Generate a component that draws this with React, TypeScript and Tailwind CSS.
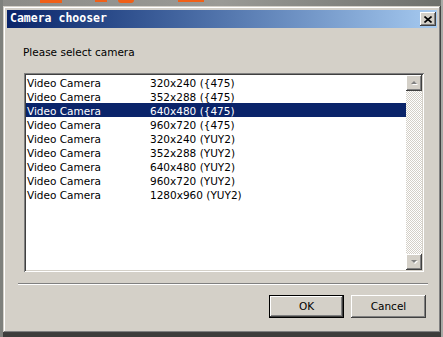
import React from "react";

const rows: [string, string][] = [
  ["Video Camera", "320x240 ({475)"],
  ["Video Camera", "352x288 ({475)"],
  ["Video Camera", "640x480 ({475)"],
  ["Video Camera", "960x720 ({475)"],
  ["Video Camera", "320x240 (YUY2)"],
  ["Video Camera", "352x288 (YUY2)"],
  ["Video Camera", "640x480 (YUY2)"],
  ["Video Camera", "960x720 (YUY2)"],
  ["Video Camera", "1280x960 (YUY2)"],
];

const raised =
  "shadow-[inset_-1px_-1px_0_#404040,inset_1px_1px_0_#ffffff,inset_-2px_-2px_0_#808080,inset_2px_2px_0_#d4d0c8]";

function Arrow({ up }: { up: boolean }) {
  return (
    <svg width="7" height="4" viewBox="0 0 7 4" className="block">
      {up ? (
        <>
          <path d="M1 4 L4 1 L7 4 Z" fill="#ffffff" />
          <path d="M0 3 L3 0 L6 3 Z" fill="#808080" />
        </>
      ) : (
        <>
          <path d="M1 1 L7 1 L4 4 Z" fill="#ffffff" />
          <path d="M0 0 L6 0 L3 3 Z" fill="#808080" />
        </>
      )}
    </svg>
  );
}

export default function App() {
  return (
    <div
      className="relative w-[443px] h-[337px] overflow-hidden bg-[#3d3d3b]"
      style={{ fontFamily: '"DejaVu Sans", Verdana, sans-serif' }}
    >
      {/* background photo strip */}
      <div className="absolute left-0 top-0 w-[443px] h-[8px] bg-gradient-to-r from-[#8c8c88] via-[#9a9a96] to-[#6e706c]" />
      <div className="absolute left-[40px] top-0 w-[22px] h-[3px] bg-[#f06018]" />
      <div className="absolute left-[118px] top-0 w-[16px] h-[3px] rounded-b-full bg-[#f06018]" />
      <div className="absolute left-[178px] top-0 w-[26px] h-[2px] bg-[#f06018]" />
      <div className="absolute left-[95px] top-0 w-[12px] h-[2px] bg-[#f06018]" />
      <div className="absolute left-0 top-0 w-[3px] h-[337px] bg-[#7e807c]" />
      <div className="absolute right-0 top-0 w-[2px] h-[337px] bg-[#a8aaa6]" />

      {/* window */}
      <div className="relative ml-[3px] mt-[6px] w-[438px] h-[327px] bg-[#d4d0c8] p-[4px] shadow-[inset_-1px_-1px_0_#404040,inset_1px_1px_0_#d4d0c8,inset_-2px_-2px_0_#808080,inset_2px_2px_0_#ffffff] flex flex-col">
        {/* title bar */}
        <div className="h-[18px] flex items-center bg-gradient-to-r from-[#0a246a] to-[#a6caf0] pl-[3px]">
          <span
            className="flex-1 text-white font-bold text-[11.5px] leading-[16px] h-[18px] whitespace-pre"
            style={{ fontFamily: '"DejaVu Sans Mono", monospace' }}
          >
            Camera chooser
          </span>
          <div className={`w-[16px] h-[14px] mr-[1px] bg-[#d4d0c8] flex items-center justify-center ${raised}`}>
            <svg width="8" height="7" viewBox="0 0 8 7">
              <path d="M0.5 0.5 L7.5 6.5 M7.5 0.5 L0.5 6.5" stroke="#000" strokeWidth="1.6" />
            </svg>
          </div>
        </div>

        {/* content */}
        <div className="flex-1 flex flex-col">
          <div className="mt-[17px] ml-[16px] text-[10.5px] leading-[14px] text-black">
            Please select camera
          </div>

          {/* listbox */}
          <div className="mt-[14px] ml-[17px] w-[400px] h-[199px] bg-white p-[2px] shadow-[inset_1px_1px_0_#808080,inset_-1px_-1px_0_#ffffff,inset_2px_2px_0_#404040,inset_-2px_-2px_0_#d4d0c8] flex">
            <div className="flex-1 flex flex-col">
              {rows.map(([a, b], i) => (
                <div
                  key={i}
                  className={`h-[14px] leading-[16px] text-[10.5px] flex whitespace-pre ${
                    i === 2 ? "bg-[#0a246a] text-white" : "text-black"
                  }`}
                >
                  <span className="w-[124px] pl-[1px]">{a}</span>
                  <span>{b}</span>
                </div>
              ))}
            </div>
            {/* scrollbar */}
            <div className="w-[16px] flex flex-col bg-[repeating-conic-gradient(#d4d0c8_0_25%,#ffffff_0_50%)] bg-[length:2px_2px]">
              <div className={`w-[16px] h-[16px] bg-[#d4d0c8] flex items-center justify-center ${raised}`}>
                <Arrow up />
              </div>
              <div className="flex-1" />
              <div className={`w-[16px] h-[16px] bg-[#d4d0c8] flex items-center justify-center ${raised}`}>
                <Arrow up={false} />
              </div>
            </div>
          </div>

          {/* separator */}
          <div className="mt-[11px] ml-[11px] w-[410px] h-[2px] border-t border-t-[#808080] border-b border-b-white" />

          {/* buttons */}
          <div className="mt-[10px] flex justify-end gap-[7px] pr-[11px]">
            <div className="w-[75px] h-[23px] border border-black bg-[#d4d0c8] shadow-[inset_-1px_-1px_0_#404040,inset_1px_1px_0_#ffffff,inset_-2px_-2px_0_#808080] flex items-center justify-center text-[10.5px] text-black">
              OK
            </div>
            <div className={`w-[75px] h-[23px] bg-[#d4d0c8] ${raised} flex items-center justify-center text-[10.5px] text-black`}>
              Cancel
            </div>
          </div>
        </div>
      </div>
    </div>
  );
}
